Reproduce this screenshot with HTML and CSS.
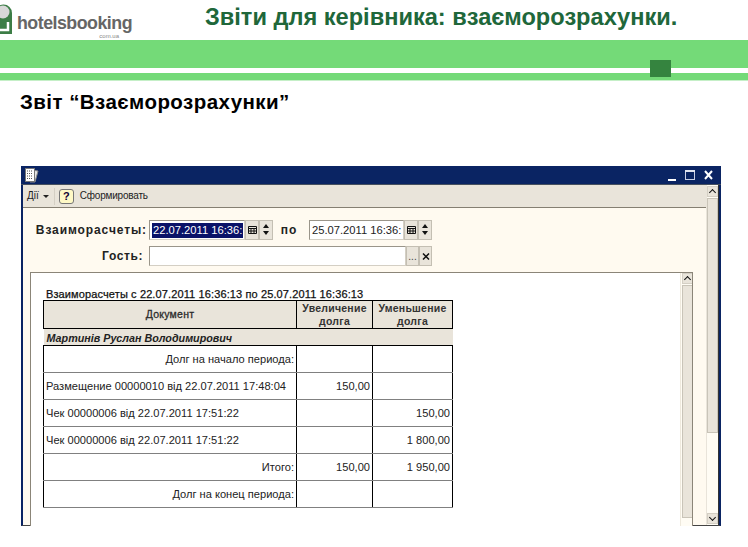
FILE: index.html
```html
<!DOCTYPE html>
<html lang="uk">
<head>
<meta charset="utf-8">
<title>Звіти для керівника</title>
<link rel="stylesheet" href="styles.css">
</head>
<body>
<header class="top">
  <div class="logo">
    <svg class="pin" width="13" height="31" viewBox="0 0 13 31"><path d="M-5 10a8.500 8.500 0 0 1 17 0v21H-5z" fill="#3c7d46"/><circle cx="3" cy="9" r="6.500" fill="#d8d8d8"/><path d="M-2 19v8h10v-8" fill="none" stroke="#fff" stroke-width="2.500"/></svg>
    <div class="brand"><span class="brand-name">hotelsbooking</span><span class="brand-sub">com.ua</span></div>
  </div>
  <h1 class="title">Звіти для керівника: взаєморозрахунки.</h1>
</header>
<div class="bands">
  <div class="band-main"></div>
  <div class="band-thin"></div>
  <div class="square"></div>
</div>
<h2 class="subtitle">Звіт “Взаєморозрахунки”</h2>
<section class="window">
  <div class="titlebar">
    <svg class="doc" width="16" height="15" viewBox="0 0 16 15"><path d="M8 2l6 1-3 11H6z" fill="#e6e6e6" stroke="#8a8a8a"/><rect x="1.500" y=".5" width="9" height="13" fill="#fff" stroke="#777"/><path d="M3 3h6M3 5.500h6M3 8h6M3 10.500h6" stroke="#555" stroke-dasharray="1 1"/></svg>
    <div class="win-btns">
      <svg width="14" height="14" viewBox="0 0 14 14"><rect x="3" y="11" width="8" height="2" fill="#fff"/></svg>
      <svg width="14" height="14" viewBox="0 0 14 14"><rect x="1.500" y="2.500" width="9" height="9" fill="none" stroke="#c9d0e6"/><rect x="1" y="2" width="10" height="2" fill="#dfe3f0"/></svg>
      <svg width="12" height="14" viewBox="0 0 12 14"><path d="M2 3l7 8M9 3l-7 8" stroke="#fff" stroke-width="2"/></svg>
    </div>
  </div>
  <div class="win-body">
    <div class="content">
      <div class="toolbar">
        <span class="tool">Дії</span><span class="caret"></span>
        <span class="tool-sep"></span>
        <span class="help">?</span>
        <span class="tool tool-run">Сформировать</span>
      </div>
      <div class="form-row">
        <label class="label label-wide">Взаиморасчеты:</label>
        <div class="field field-date"><span class="selected">22.07.2011 16:36:</span></div>
        <span class="btn"><svg width="9" height="8" viewBox="0 0 9 8"><path d="M.5.500h8v7h-8zM.5 2.500h8M3 2.500v5M6 2.500v5M.5 5h8" fill="none" stroke="#111"/></svg></span>
        <span class="spin"><i class="up"></i><i class="down"></i></span>
        <label class="label label-to">по</label>
        <div class="field field-date2">25.07.2011 16:36:</div>
        <span class="btn"><svg width="9" height="8" viewBox="0 0 9 8"><path d="M.5.500h8v7h-8zM.5 2.500h8M3 2.500v5M6 2.500v5M.5 5h8" fill="none" stroke="#111"/></svg></span>
        <span class="spin"><i class="up"></i><i class="down"></i></span>
      </div>
      <div class="form-row form-row2">
        <label class="label label-wide label-guest">Гость:</label>
        <div class="field field-guest"></div>
        <span class="btn btn-dots">...</span>
        <span class="btn btn-x"><svg width="8" height="7" viewBox="0 0 8 7"><path d="M1 .5l6 6M7 .5l-6 6" stroke="#111" stroke-width="1.500"/></svg></span>
      </div>
      <div class="panel">
        <div class="report">
          <div class="report-title">Взаиморасчеты с 22.07.2011 16:36:13 по 25.07.2011 16:36:13</div>
          <table class="sheet">
            <colgroup><col class="c1"><col class="c2"><col class="c3"></colgroup>
            <tr class="head"><th>Документ</th><th>Увеличение<br>долга</th><th>Уменьшение<br>долга</th></tr>
            <tr class="group"><td colspan="3">Мартинів Руслан Володимирович</td></tr>
            <tr><td class="r">Долг на начало периода:</td><td></td><td></td></tr>
            <tr><td>Размещение 00000010 від 22.07.2011 17:48:04</td><td class="r">150,00</td><td></td></tr>
            <tr><td>Чек 00000006 від 22.07.2011 17:51:22</td><td></td><td class="r">150,00</td></tr>
            <tr><td>Чек 00000006 від 22.07.2011 17:51:22</td><td></td><td class="r">1 800,00</td></tr>
            <tr><td class="r">Итого:</td><td class="r">150,00</td><td class="r">1 950,00</td></tr>
            <tr><td class="r">Долг на конец периода:</td><td></td><td></td></tr>
          </table>
        </div>
        <div class="sb sb-inner"><span class="sb-btn"><i class="chev-up"></i></span><span class="sb-thumb"></span></div>
      </div>
    </div>
    <div class="sb sb-outer"><span class="sb-btn"><i class="chev-up"></i></span><span class="sb-thumb"></span><span class="sb-btn sb-bottom"><i class="chev-down"></i></span></div>
  </div>
</section>
</body>
</html>
```
FILE: styles.css
```css
* { box-sizing: border-box; }
html, body { margin: 0; padding: 0; background: #fff; }
body { width: 748px; height: 547px; overflow: hidden; font-family: "Liberation Sans", Arial, sans-serif; color: #000; }

.top { height: 40px; display: flex; }
.logo { width: 205px; display: flex; padding-top: 3px; }
.pin { flex: none; }
.brand { margin: 12px 0 0 3px; width: 116px; display: flex; flex-direction: column; align-items: flex-end; height: 24px; }
.brand-name { font-size: 17.800px; line-height: 17px; font-weight: 700; color: #666; letter-spacing: -.5px; white-space: nowrap; }
.brand-sub { font-size: 6px; line-height: 5px; color: #888; margin: 2px 13px 0 0; }
.title { margin: 0; font-size: 23.600px; line-height: 27px; padding-top: 4px; font-weight: 700; color: #20673a; white-space: nowrap; }

.bands { position: relative; height: 41px; }
.band-main { height: 28px; background: #74da78; }
.band-thin { height: 8px; margin-top: 5px; background: #74da78; border-bottom: 1px solid #c5efc7; }
.square { position: absolute; left: 650px; top: 20px; width: 21px; height: 17px; background: #35843f; }

.subtitle { margin: 10px 0 0 20px; font-size: 20.500px; line-height: 22px; font-weight: 700; letter-spacing: .45px; }

.window { margin: 53px 0 0 21px; width: 700px; height: 360px; display: flex; flex-direction: column; background: #fffaf0; border-left: 2px solid #0a2463; border-right: 2px solid #0a2463; border-bottom: 1px solid #444; }
.titlebar { height: 19px; flex: none; display: flex; align-items: center; justify-content: space-between; background: #0a2463; border-bottom: 1px solid #46505f; margin: 0 -2px; padding-left: 3px; }
.doc { flex: none; }
.win-btns { display: flex; gap: 5px; margin-right: 6px; }
.win-body { flex: 1; min-height: 0; display: flex; }
.content { width: 683px; flex: none; }

.toolbar { height: 23px; display: flex; align-items: center; background: #e9e4da; border-bottom: 1px solid #857f72; padding-left: 4px; font-size: 10px; color: #222; }
.tool { line-height: 12px; }
.tool-run { letter-spacing: -.2px; }
.caret { width: 0; height: 0; margin-left: 4px; border: 3px solid transparent; border-top: 3px solid #222; border-bottom: 0; }
.tool-sep { width: 1px; height: 17px; margin: 0 4px 0 5px; background: #d4cfc4; }
.help { width: 15px; height: 15px; margin-right: 6px; border: 1px solid #777; border-radius: 3px; background: #fff9c6; text-align: center; font-size: 11px; line-height: 13px; font-weight: 700; color: #103; }

.sb { display: flex; flex-direction: column; align-items: center; background: #fffcf4; }
.sb-outer { width: 13px; padding-top: 1px; border-left: 1px solid #e9e4da; border-right: 1px solid #333; }
.sb-outer .sb-thumb { height: 235px; }
.sb-outer .sb-bottom { margin-top: auto; margin-bottom: 1px; }
.sb-inner { width: 13px; flex: none; border-left: 1px solid #eee9dd; }
.sb-inner .sb-thumb { height: 233px; }
.sb-btn { width: 11px; height: 11px; flex: none; display: flex; align-items: center; justify-content: center; background: #e9e4da; border: 1px solid #d4cfc4; }
.sb-thumb { width: 11px; flex: none; margin-top: 1px; background: #e9e4da; border: 1px solid #c9c4b8; }
.chev-up, .chev-down { width: 5px; height: 5px; border-left: 1px solid #111; border-top: 1px solid #111; }
.chev-up { transform: translateY(1px) rotate(45deg); }
.chev-down { transform: translateY(-1px) rotate(225deg); }

.form-row { display: flex; height: 20px; margin-top: 12px; align-items: stretch; font-size: 11px; }
.form-row2 { margin-top: 6px; }
.label { display: flex; align-items: center; justify-content: flex-end; font-size: 12px; font-weight: 700; color: #222; letter-spacing: .9px; white-space: nowrap; }
.label-wide { width: 124px; margin-right: 2px; }
.label-guest { padding-right: 4px; letter-spacing: .6px; }
.label-to { width: 36px; padding-right: 4px; justify-content: center; }
.field { background: #fff; border: 1px solid #9a958a; border-right-color: #d4cfc4; border-bottom-color: #d4cfc4; display: flex; align-items: center; font-size: 11.200px; color: #222; padding-left: 2px; white-space: nowrap; overflow: hidden; }
.field-date { width: 96px; }
.field-date2 { width: 95px; }
.field-guest { width: 257px; }
.selected { background: #0a1268; color: #fff; line-height: 15px; padding: 0 1px; }
.btn { width: 14px; display: flex; align-items: center; justify-content: center; background: #e9e4da; border: 1px solid #c4bfb3; }
.btn-dots { width: 13px; font-size: 10px; color: #444; }
.btn-x { width: 13px; }
.spin { width: 14px; display: flex; flex-direction: column; align-items: center; justify-content: space-between; padding: 3px 0 4px; background: #e9e4da; border: 1px solid #c4bfb3; }
.up, .down { width: 0; height: 0; border: 3px solid transparent; }
.up { border-top: 0; border-bottom: 4px solid #111; }
.down { border-bottom: 0; border-top: 4px solid #111; }

.panel { margin: 6px 0 0 7px; width: 663px; height: 254px; display: flex; border: 1px solid #8b8578; border-bottom: 0; background: #fff; overflow: hidden; }
.report { width: 649px; flex: none; padding: 15px 0 0 12px; }
.report-title { font-size: 11px; line-height: 12px; padding-left: 3px; height: 12px; letter-spacing: .12px; color: #111; -webkit-text-stroke: .25px #111; white-space: nowrap; }
.sheet { border-collapse: collapse; table-layout: fixed; width: 410px; font-size: 11.100px; color: #222; }
.c1 { width: 253px; }
.c2 { width: 76px; }
.c3 { width: 80px; }
.sheet td, .sheet th { padding: 0 2px 0 2px; height: 27px; border: 1px solid #808080; border-left-color: #000; border-right-color: #000; white-space: nowrap; }
.sheet .r { text-align: right; }
.head th { height: 28px; background: #e9e4da; border: 1px solid #000; font-size: 10.500px; line-height: 13px; font-weight: 700; text-align: center; padding: 0; letter-spacing: .25px; color: #333; }
.head th:first-child { font-weight: 400; -webkit-text-stroke: .3px #222; }
.sheet .group td { height: 17px; background: #e9e4da; border: 0; border-bottom: 1px solid #000; font-size: 10.750px; font-style: italic; font-weight: 700; padding: 2px 0 0 3px; color: #222; }
```
